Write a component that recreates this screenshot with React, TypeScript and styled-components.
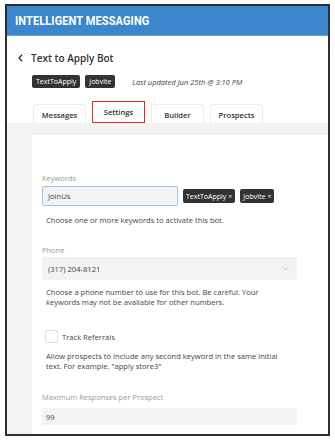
import React from "react";
import styled, { createGlobalStyle } from "styled-components";

const GlobalStyle = createGlobalStyle`
  html, body { margin: 0; padding: 0; background: #ffffff; }
  body { font-family: "Open Sans", "Noto Sans", sans-serif; color: #3a3a3a; }
  * { box-sizing: border-box; }
`;

const Frame = styled.div`
  margin: 4px 0 0 5px;
  width: 325px;
  height: 432px;
  border: 2px solid #2e2e2e;
  display: flex;
  flex-direction: column;
  overflow: hidden;
  background: #fff;
`;

const Header = styled.div`
  height: 30px;
  flex: none;
  background: #3c86cb;
  border-bottom: 1px solid #6aa5dc;
  display: flex;
  align-items: center;
  padding-left: 8px;
`;

const HeaderTitle = styled.div`
  font-family: Roboto, "Liberation Sans", sans-serif;
  font-weight: 700;
  font-size: 12.7px;
  color: #ffffff;
  white-space: nowrap;
  transform: scaleX(0.87);
  transform-origin: left center;
  letter-spacing: 0.1px;
`;

const Top = styled.div`
  flex: none;
  display: flex;
  flex-direction: column;
`;

const TitleRow = styled.div`
  display: flex;
  align-items: center;
  gap: 8px;
  padding: 14px 0 0 11px;
  height: 29px;
`;

const BackIcon = styled.svg`
  width: 5px;
  height: 8px;
  flex: none;
`;

const Title = styled.div`
  font-weight: 600;
  font-size: 10px;
  color: #333;
  white-space: nowrap;
`;

const MetaRow = styled.div`
  display: flex;
  align-items: center;
  gap: 5px;
  padding: 10px 0 0 25px;
`;

const Tag = styled.span<{ $h?: number; $pad?: number }>`
  display: inline-flex;
  align-items: center;
  gap: 2px;
  height: ${(p) => p.$h ?? 13}px;
  padding: 0 ${(p) => p.$pad ?? 4}px;
  background: #333;
  color: #fff;
  border-radius: 2px;
  font-size: 7px;
  white-space: nowrap;
`;

const TagX = styled.span`
  font-size: 7px;
  color: #e6e6e6;
`;

const Updated = styled.span`
  margin-left: 12px;
  font-style: italic;
  font-size: 7.5px;
  color: #444;
  white-space: nowrap;
`;

const Tabs = styled.div`
  display: flex;
  align-items: flex-end;
  gap: 6px;
  padding: 11px 0 0 26px;
  height: 35px;
`;

const Tab = styled.div<{ $active?: boolean }>`
  width: 53px;
  height: ${(p) => (p.$active ? 22 : 19)}px;
  display: flex;
  align-items: center;
  justify-content: center;
  padding-top: ${(p) => (p.$active ? 0 : 2)}px;
  background: #fff;
  border: 1px solid ${(p) => (p.$active ? "#e8262a" : "#ececec")};
  border-bottom: ${(p) => (p.$active ? "1px solid #e8262a" : "none")};
  border-radius: ${(p) => (p.$active ? "0" : "3px 3px 0 0")};
  font-weight: 600;
  font-size: 7.6px;
  color: #333;
  white-space: nowrap;
`;

const Body = styled.div`
  flex: 1;
  background: #f3f3f3;
  padding: 12px 0 0 25px;
  display: flex;
`;

const Card = styled.div`
  flex: 1;
  background: #fff;
  padding: 38px 0 0 10px;
  display: flex;
  flex-direction: column;
`;

const Label = styled.div<{ $mt?: number }>`
  margin-top: ${(p) => p.$mt ?? 0}px;
  font-size: 7.5px;
  line-height: 10px;
  color: #9a9a9a;
  white-space: nowrap;
`;

const KeywordRow = styled.div`
  margin-top: 3px;
  display: flex;
  align-items: center;
  gap: 5px;
`;

const KeywordInput = styled.div`
  width: 136px;
  height: 20px;
  border: 1px solid #9fc4ea;
  border-radius: 2px;
  background: #f2f2f7;
  display: flex;
  align-items: center;
  padding-left: 5px;
  font-size: 7.6px;
  color: #444;
`;

const Help = styled.div<{ $mt?: number }>`
  margin-top: ${(p) => p.$mt ?? 0}px;
  padding-left: 4px;
  font-size: 7.6px;
  line-height: 10px;
  color: #444;
  max-width: 236px;
`;

const Select = styled.div`
  margin-top: 2px;
  width: 255px;
  height: 23px;
  background: #f3f3f3;
  border-radius: 2px;
  display: flex;
  align-items: center;
  justify-content: space-between;
  padding: 0 8px 0 6px;
  font-size: 7.6px;
  color: #444;
`;

const Chevron = styled.svg`
  width: 7px;
  height: 5px;
`;

const CheckRow = styled.div`
  margin-top: 23px;
  padding-left: 3px;
  display: flex;
  align-items: center;
  gap: 4px;
  font-size: 7.6px;
  color: #444;
`;

const CheckBox = styled.span`
  width: 13px;
  height: 13px;
  border: 1px solid #dcdcdc;
  border-radius: 2px;
  background: #fff;
  flex: none;
`;

const NumberInput = styled.div`
  margin-top: 6px;
  width: 255px;
  height: 17px;
  background: #f2f2f7;
  border-radius: 2px;
  display: flex;
  align-items: center;
  padding-left: 4px;
  font-size: 7.6px;
  color: #444;
`;

export default function App() {
  return (
    <>
      <GlobalStyle />
      <Frame>
        <Header>
          <HeaderTitle>INTELLIGENT MESSAGING</HeaderTitle>
        </Header>
        <Top>
          <TitleRow>
            <BackIcon viewBox="0 0 5 8">
              <path d="M4 0.8 L1 4 L4 7.2" fill="none" stroke="#333" strokeWidth="1.3" />
            </BackIcon>
            <Title>Text to Apply Bot</Title>
          </TitleRow>
          <MetaRow>
            <Tag>TextToApply</Tag>
            <Tag>Jobvite</Tag>
            <Updated>Last updated Jun 25th @ 3:10 PM</Updated>
          </MetaRow>
          <Tabs>
            <Tab>Messages</Tab>
            <Tab $active>Settings</Tab>
            <Tab>Builder</Tab>
            <Tab>Prospects</Tab>
          </Tabs>
        </Top>
        <Body>
          <Card>
            <Label>Keywords</Label>
            <KeywordRow>
              <KeywordInput>JoinUs</KeywordInput>
              <Tag $h={14} $pad={3}>
                TextToApply<TagX>×</TagX>
              </Tag>
              <Tag $h={14} $pad={3}>
                Jobvite<TagX>×</TagX>
              </Tag>
            </KeywordRow>
            <Help $mt={9}>Choose one or more keywords to activate this bot.</Help>
            <Label $mt={20}>Phone</Label>
            <Select>
              <span>(317) 204-8121</span>
              <Chevron viewBox="0 0 7 5">
                <path d="M0.5 0.8 L3.5 3.8 L6.5 0.8" fill="none" stroke="#c8c8c8" strokeWidth="0.9" />
              </Chevron>
            </Select>
            <Help $mt={7}>
              Choose a phone number to use for this bot. Be careful. Your keywords may not be available for other numbers.
            </Help>
            <CheckRow>
              <CheckBox />
              <span>Track Referrals</span>
            </CheckRow>
            <Help $mt={8}>
              Allow prospects to include any second keyword in the same initial text. For example, "apply store3"
            </Help>
            <Label $mt={21}>Maximum Responses per Prospect</Label>
            <NumberInput>99</NumberInput>
          </Card>
        </Body>
      </Frame>
    </>
  );
}
